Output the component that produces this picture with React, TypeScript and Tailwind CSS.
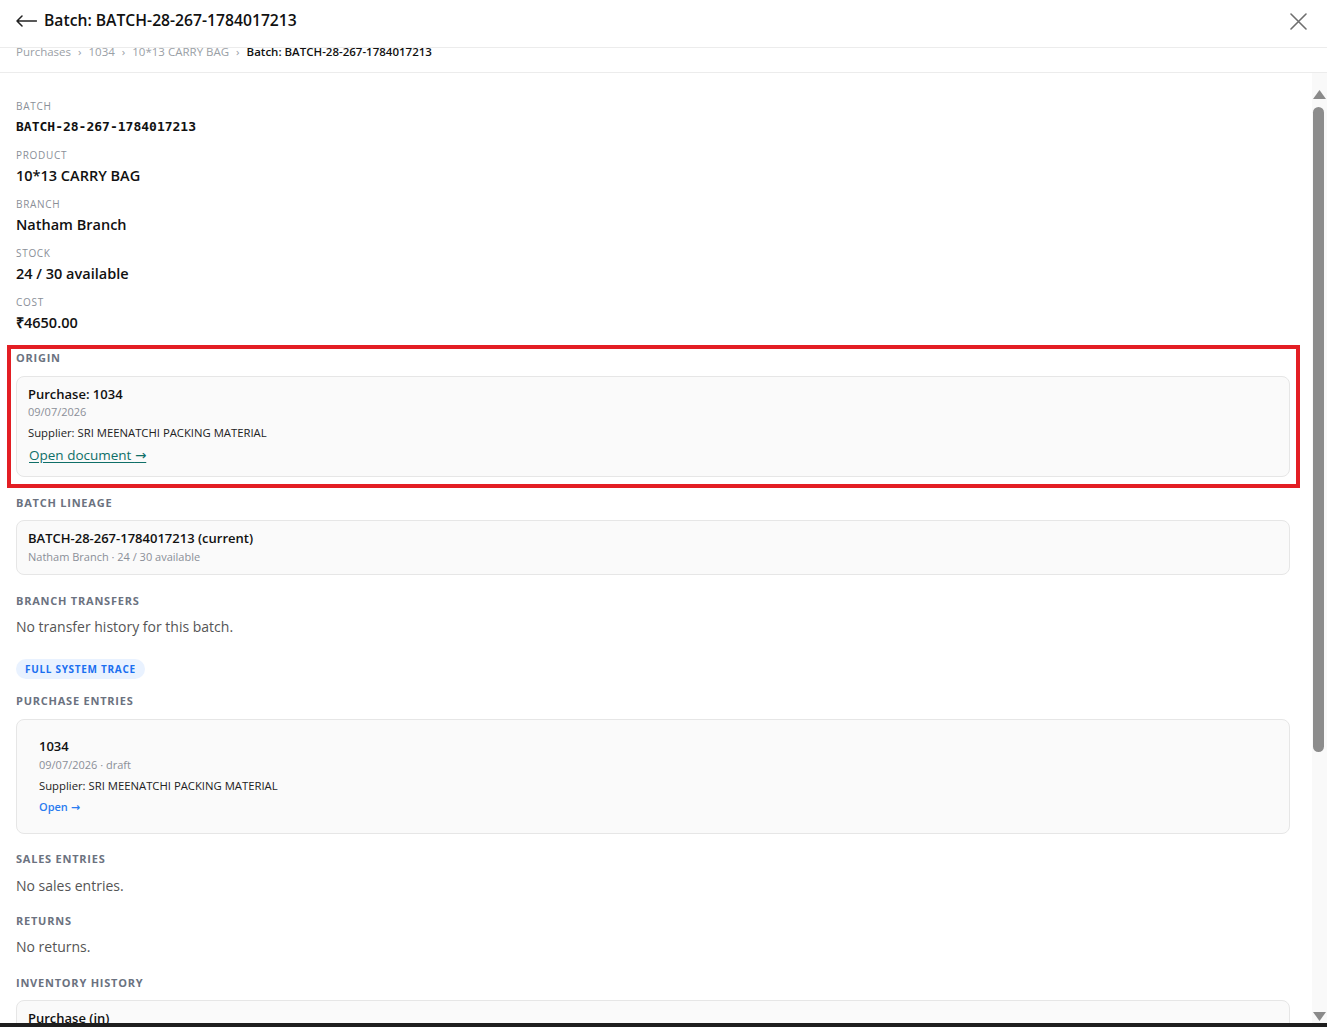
import React from "react";

const FieldLabel = ({ children }: { children: React.ReactNode }) => (
  <div className="text-[10px] leading-[15px] tracking-[0.07em] text-[#8a8f98] uppercase">
    {children}
  </div>
);

const SectionTitle = ({ children }: { children: React.ReactNode }) => (
  <div className="text-[11px] leading-[16px] font-bold tracking-[0.07em] text-[#6b7280] uppercase">
    {children}
  </div>
);

const Arrow = () => (
  <span className="font-['DejaVu_Sans',sans-serif]">→</span>
);

const Field = ({
  label,
  children,
  mono,
}: {
  label: string;
  children: React.ReactNode;
  mono?: boolean;
}) => (
  <div className="mb-[11px]">
    <FieldLabel>{label}</FieldLabel>
    <div
      className={
        mono
          ? "mt-[3px] leading-[20px] text-[13px] font-semibold text-[#111] font-['DejaVu_Sans_Mono',monospace]"
          : "mt-[3px] leading-[20px] text-[14.5px] font-semibold text-[#111]"
      }
    >
      {children}
    </div>
  </div>
);

const Card = ({
  children,
  className = "",
}: {
  children: React.ReactNode;
  className?: string;
}) => (
  <div
    className={
      "rounded-lg border border-[#e6e6e6] bg-[#fafafa] " + className
    }
  >
    {children}
  </div>
);

const Scrollbar = () => (
  <div className="w-[15px] shrink-0 bg-[#f9f9f9] flex flex-col items-center pt-[17px] pb-[2px]">
    <svg width="13" height="9" viewBox="0 0 13 9">
      <path d="M6.5 0L13 9H0z" fill="#8a8a8a" />
    </svg>
    <div className="mt-[8px] w-[11px] h-[645px] rounded-full bg-[#8c8c8c] -translate-x-[1px]" />
    <div className="flex-1" />
    <svg width="13" height="9" viewBox="0 0 13 9">
      <path d="M0 0h13L6.5 9z" fill="#8a8a8a" />
    </svg>
  </div>
);

export default function App() {
  return (
    <div className="w-[1327px] h-[1027px] bg-white flex flex-col overflow-hidden font-['Open_Sans',sans-serif] text-[#111]">
      {/* Header */}
      <div className="h-[48px] shrink-0 border-b border-[#ececec] flex items-start justify-between pl-[16px] pr-[20px] pt-[11px]">
        <div className="flex items-center gap-[7px]">
          <svg width="21" height="12" viewBox="0 0 21 12" className="mt-[1px]">
            <path
              d="M20.5 6H1M6 1L1 6l5 5"
              fill="none"
              stroke="#222"
              strokeWidth="1.5"
              strokeLinecap="round"
              strokeLinejoin="round"
            />
          </svg>
          <span className="text-[15.7px] leading-[18px] font-semibold">
            Batch: BATCH-28-267-1784017213
          </span>
        </div>
        <svg width="17" height="17" viewBox="0 0 17 17" className="mt-[2px]">
          <path
            d="M1 1l15 15M16 1L1 16"
            fill="none"
            stroke="#6f6f6f"
            strokeWidth="1.6"
            strokeLinecap="round"
          />
        </svg>
      </div>

      {/* Breadcrumb */}
      <div className="h-[25px] shrink-0 border-b border-[#ececec] px-[16px]">
        <div className="flex items-start text-[11.5px] leading-[11px] -translate-y-[2px]">
          <span className="text-[#9aa0a6]">Purchases</span>
          <span className="text-[#9aa0a6] mx-[7px]">›</span>
          <span className="text-[#9aa0a6]">1034</span>
          <span className="text-[#9aa0a6] mx-[7px]">›</span>
          <span className="text-[#9aa0a6]">10*13 CARRY BAG</span>
          <span className="text-[#9aa0a6] mx-[7px]">›</span>
          <span className="font-semibold text-[#111]">
            Batch: BATCH-28-267-1784017213
          </span>
        </div>
      </div>

      {/* Scroll area */}
      <div className="flex-1 flex min-h-0">
        <div className="flex-1 overflow-hidden pl-[16px] pr-[22px] pt-[26px]">
          <Field label="Batch" mono>
            BATCH-28-267-1784017213
          </Field>
          <Field label="Product">10*13 CARRY BAG</Field>
          <Field label="Branch">Natham Branch</Field>
          <Field label="Stock">24 / 30 available</Field>
          <Field label="Cost">₹4650.00</Field>

          {/* Origin (highlighted) */}
          <div className="relative mt-[17px]">
            <div className="pointer-events-none absolute -left-[9px] -right-[10px] -top-[5px] -bottom-[11px] border-[4px] border-[#e31e24]" />
            <SectionTitle>Origin</SectionTitle>
            <Card className="mt-[10px] px-[11px] pt-[8px] pb-[10px]">
              <div className="text-[13px] leading-[18px] font-semibold">
                Purchase: 1034
              </div>
              <div className="text-[11px] leading-[16px] text-[#8a8f98] mt-[1px]">
                09/07/2026
              </div>
              <div className="text-[11.3px] leading-[16px] text-[#222] mt-[5px]">
                Supplier: SRI MEENATCHI PACKING MATERIAL
              </div>
              <a className="inline-block mt-[4px] ml-[1px] text-[13.5px] leading-[20px] text-[#0f6f68] underline underline-offset-2">
                Open document <Arrow />
              </a>
            </Card>
          </div>

          {/* Batch lineage */}
          <div className="mt-[18px]">
            <SectionTitle>Batch lineage</SectionTitle>
            <Card className="mt-[9px] px-[11px] pt-[8px] pb-[9px]">
              <div className="text-[13px] leading-[18px] font-semibold">
                BATCH-28-267-1784017213 (current)
              </div>
              <div className="text-[11px] leading-[16px] text-[#8a8f98] mt-[2px]">
                Natham Branch · 24 / 30 available
              </div>
            </Card>
          </div>

          {/* Branch transfers */}
          <div className="mt-[18px]">
            <SectionTitle>Branch transfers</SectionTitle>
            <div className="mt-[8px] text-[14px] leading-[20px] text-[#555]">
              No transfer history for this batch.
            </div>
          </div>

          <div className="mt-[18px]">
            <span className="inline-block rounded-full bg-[#e9f2ff] px-[9px] text-[10px] leading-[20px] font-bold tracking-[0.07em] text-[#1a6ff0]">
              FULL SYSTEM TRACE
            </span>
          </div>

          {/* Purchase entries */}
          <div className="mt-[14px]">
            <SectionTitle>Purchase entries</SectionTitle>
            <Card className="mt-[10px] p-[11px]">
              <div className="px-[11px] pt-[6px] pb-[6px]">
                <div className="text-[13px] leading-[18px] font-semibold">
                  1034
                </div>
                <div className="text-[11px] leading-[16px] text-[#8a8f98] mt-[2px]">
                  09/07/2026 · draft
                </div>
                <div className="text-[11.3px] leading-[16px] text-[#222] mt-[5px]">
                  Supplier: SRI MEENATCHI PACKING MATERIAL
                </div>
                <div className="text-[11px] leading-[16px] font-semibold text-[#2b7cf0] mt-[5px]">
                  Open <Arrow />
                </div>
              </div>
            </Card>
          </div>

          {/* Sales entries */}
          <div className="mt-[17px]">
            <SectionTitle>Sales entries</SectionTitle>
            <div className="mt-[9px] text-[14px] leading-[20px] text-[#555]">
              No sales entries.
            </div>
          </div>

          {/* Returns */}
          <div className="mt-[17px]">
            <SectionTitle>Returns</SectionTitle>
            <div className="mt-[8px] text-[14px] leading-[20px] text-[#555]">
              No returns.
            </div>
          </div>

          {/* Inventory history */}
          <div className="mt-[18px]">
            <SectionTitle>Inventory history</SectionTitle>
            <Card className="mt-[9px] px-[11px] pt-[8px] pb-[9px]">
              <div className="text-[13px] leading-[18px] font-semibold">
                Purchase (in)
              </div>
              <div className="text-[11px] leading-[16px] text-[#8a8f98] mt-[2px]">
                09/07/2026 · +30
              </div>
            </Card>
          </div>
        </div>
        <Scrollbar />
      </div>

      <div className="h-[4px] shrink-0 bg-[#1e1e1e]" />
    </div>
  );
}
